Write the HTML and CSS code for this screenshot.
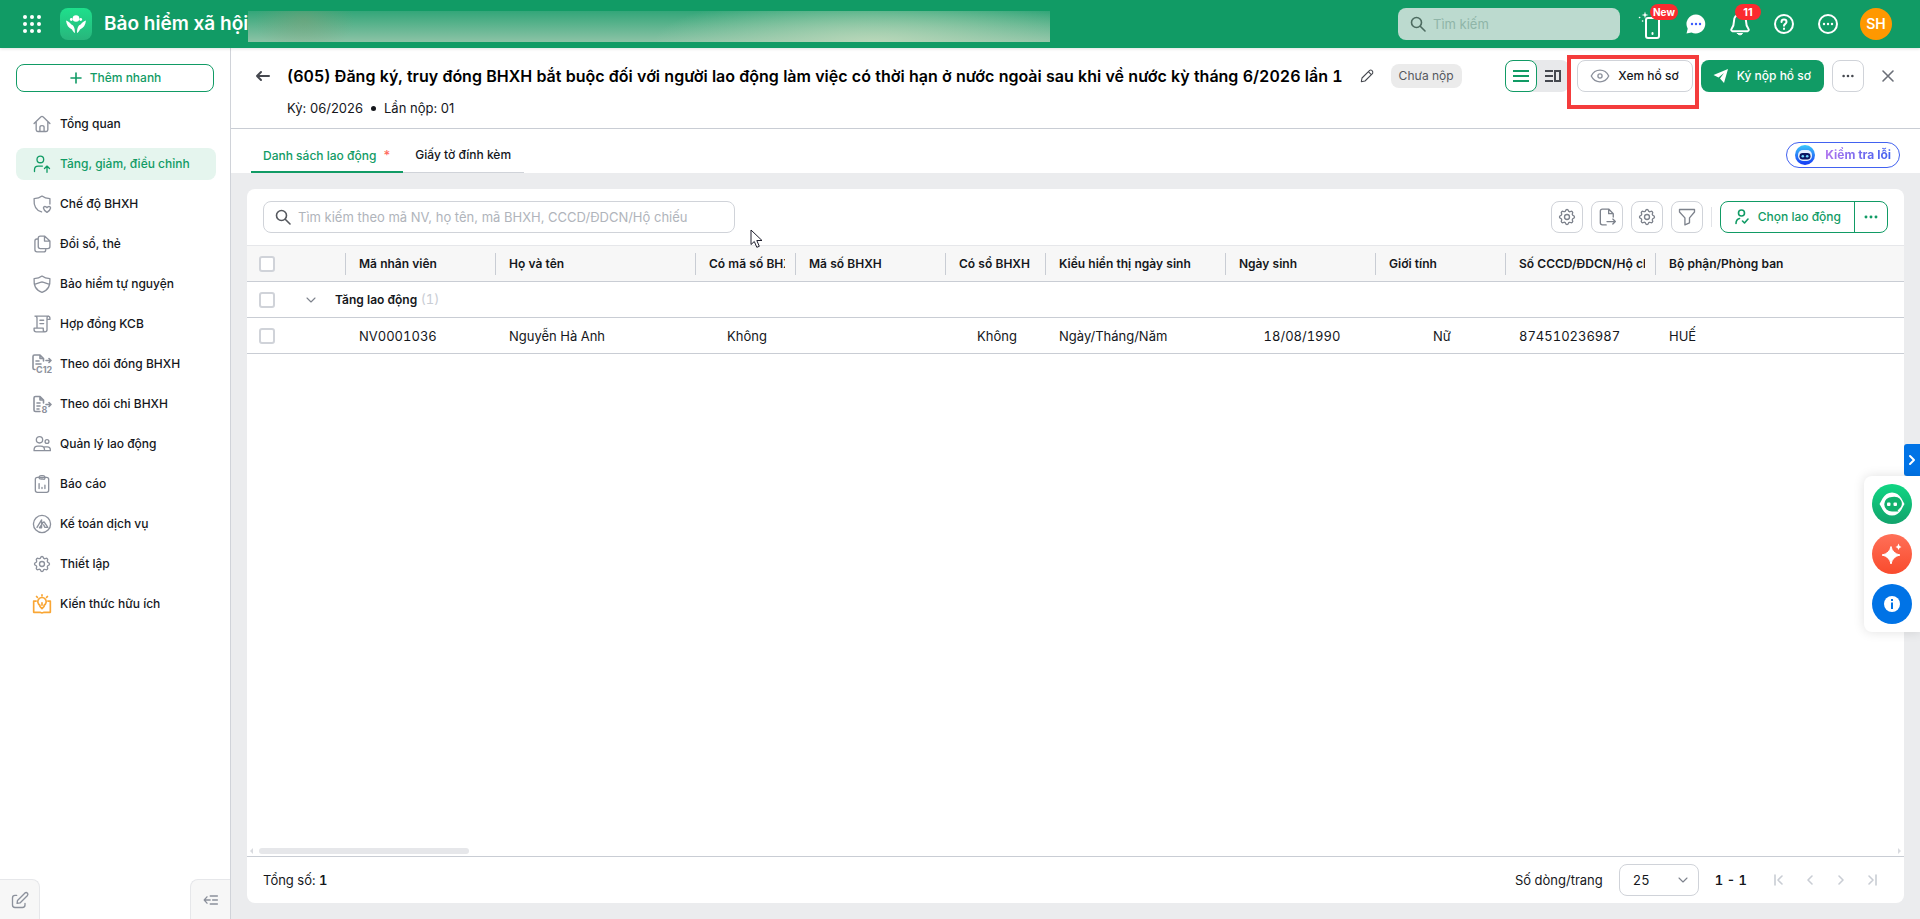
FILE: index.html
```html
<!DOCTYPE html>
<html lang="vi">
<head>
    <meta charset="UTF-8">
    <meta name="viewport" content="width=device-width, initial-scale=1.0">
    <title>Bảo hiểm xã hội</title>
    <link rel="stylesheet" href="styles.css">
</head>
<body>
    <svg class="sprite" aria-hidden="true">
        <symbol id="i-search" viewBox="0 0 16 16">
            <circle cx="6.500" cy="6.500" r="5"></circle>
            <path d="m10.500 10.500 4.500 4.500"></path>
        </symbol>
        <symbol id="i-gear" viewBox="0 0 24 24">
            <path d="M10.325 4.317c.426-1.756 2.924-1.756 3.350 0a1.724 1.724 0 0 0 2.573 1.066c1.543-.94 3.310.826 2.370 2.370a1.724 1.724 0 0 0 1.065 2.572c1.756.426 1.756 2.924 0 3.350a1.724 1.724 0 0 0-1.066 2.573c.94 1.543-.826 3.310-2.370 2.370a1.724 1.724 0 0 0-2.572 1.065c-.426 1.756-2.924 1.756-3.350 0a1.724 1.724 0 0 0-2.573-1.066c-1.543.94-3.310-.826-2.370-2.370a1.724 1.724 0 0 0-1.065-2.572c-1.756-.426-1.756-2.924 0-3.350a1.724 1.724 0 0 0 1.066-2.573c-.94-1.543.826-3.310 2.370-2.370 1 .608 2.296.07 2.572-1.065z"></path>
            <circle cx="12" cy="12" r="3"></circle>
        </symbol>
        <symbol id="i-dots" viewBox="0 0 24 24">
            <g fill="currentColor" stroke="none">
                <circle cx="4.500" cy="12" r="2.200"></circle>
                <circle cx="12" cy="12" r="2.200"></circle>
                <circle cx="19.500" cy="12" r="2.200"></circle>
            </g>
        </symbol>
        <symbol id="i-chevron" viewBox="0 0 24 24">
            <path d="m6 9 6 6 6-6"></path>
        </symbol>
    </svg>

    <header class="topbar">
        <button class="apps-button" aria-label="Ứng dụng">
            <svg width="20" height="20" viewBox="0 0 20 20" fill="currentColor">
                <circle cx="3" cy="3" r="2"></circle><circle cx="10" cy="3" r="2"></circle><circle cx="17" cy="3" r="2"></circle>
                <circle cx="3" cy="10" r="2"></circle><circle cx="10" cy="10" r="2"></circle><circle cx="17" cy="10" r="2"></circle>
                <circle cx="3" cy="17" r="2"></circle><circle cx="10" cy="17" r="2"></circle><circle cx="17" cy="17" r="2"></circle>
            </svg>
        </button>
        <div class="logo">
            <svg width="32" height="32" viewBox="0 0 32 32" fill="#fff">
                <circle cx="16" cy="10.500" r="3.300"></circle>
                <circle cx="11.300" cy="11.500" r="1.400"></circle>
                <circle cx="20.700" cy="11.500" r="1.400"></circle>
                <path d="M6 12.500c2.500 1 4.200 2.500 5.700 4.300 1.900.4 3.300 3.200 3.300 8.200-1.300-.6-2.400-2-3-3.500C8.500 20 6.500 17 6 12.500z"></path>
                <path d="M26 12.500c-2.500 1-4.200 2.500-5.700 4.300-1.900.4-3.300 3.200-3.300 8.200 1.300-.6 2.400-2 3-3.500 3.500-1.500 5.500-4.500 6-9z"></path>
            </svg>
        </div>
        <div class="app-name">Bảo hiểm xã hội</div>
        <div class="company"></div>
        <div class="top-right">
            <label class="top-search">
                <svg class="icon" width="16" height="16"><use href="#i-search"></use></svg>
                <input type="text" placeholder="Tìm kiếm" aria-label="Tìm kiếm">
            </label>
            <button class="top-button" aria-label="Ứng dụng di động">
                <svg class="icon" width="28" height="32" viewBox="0 0 28 32">
                    <rect x="8" y="10" width="13" height="20" rx="2"></rect>
                    <path d="M14.500 25v1" stroke-width="2"></path>
                    <path d="m7 3.500.8 2.700 2.700.8-2.700.8L7 10.500l-.8-2.700L3.500 7l2.700-.8z" fill="currentColor" stroke="none"></path>
                    <path d="M1.500 9.500h.2M4.500 13h.2" stroke-width="1.500"></path>
                </svg>
                <span class="badge new">New</span>
            </button>
            <button class="top-button" aria-label="Tin nhắn">
                <svg width="20" height="20" viewBox="0 0 20 20">
                    <path d="M10 .5a9.500 9.500 0 1 1-4.500 18L.5 19.500l1.200-4.800A9.500 9.500 0 0 1 10 .5z" fill="#fff"></path>
                    <g fill="#3b5bfd"><circle cx="6" cy="10" r="1.200"></circle><circle cx="10" cy="10" r="1.200"></circle><circle cx="14" cy="10" r="1.200"></circle></g>
                </svg>
            </button>
            <button class="top-button" aria-label="Thông báo">
                <svg class="icon" width="24" height="24" viewBox="0 0 24 24">
                    <path d="M12 2.500c-4 0-6 3-6 6.500 0 4-1 6-2.500 8-.7 1 0 2 1 2.200h15c1-.2 1.700-1.200 1-2.200C19 15 18 13 18 9c0-3.500-2-6.500-6-6.500z"></path>
                    <path d="M9.500 21.500h5c-.8 1.800-4.200 1.800-5 0z" fill="currentColor" stroke-width="1"></path>
                </svg>
                <span class="badge count">11</span>
            </button>
            <button class="top-button" aria-label="Trợ giúp">
                <svg class="icon" width="20" height="20" viewBox="0 0 20 20">
                    <circle cx="10" cy="10" r="9"></circle>
                    <path d="M7.500 8c0-3.300 5-3.300 5 0 0 1.800-2.500 2-2.500 3.800M10 14.500v.5"></path>
                </svg>
            </button>
            <button class="top-button" aria-label="Khác">
                <svg class="icon" width="20" height="20" viewBox="0 0 20 20">
                    <circle cx="10" cy="10" r="9"></circle>
                    <g fill="currentColor" stroke="none"><circle cx="6" cy="10" r="1.200"></circle><circle cx="10" cy="10" r="1.200"></circle><circle cx="14" cy="10" r="1.200"></circle></g>
                </svg>
            </button>
            <button class="avatar">SH</button>
        </div>
    </header>

    <div class="layout">
        <aside class="sidebar">
            <button class="quick-add">
                <svg class="icon" width="14" height="14" viewBox="0 0 14 14"><path d="M7 2v10M2 7h10"></path></svg>
                Thêm nhanh
            </button>
            <nav class="menu">
                <a class="menu-item" href="#">
                    <svg class="icon" width="20" height="20" viewBox="0 0 24 24"><path d="m2.500 11.500 8-8q1.500-1.200 3 0l8 8M5 9.500V19q0 2 2 2h10q2 0 2-2V9.500M9.500 21v-5q0-2 2.500-2t2.500 2v5"></path></svg>
                    Tổng quan
                </a>
                <a class="menu-item active" href="#">
                    <svg class="icon" width="20" height="20" viewBox="0 0 24 24"><circle cx="10" cy="6.500" r="4"></circle><path d="M3 21v-2q0-4.500 4.500-4.500h5M18 22v-7M15 17.500l3-3 3 3"></path></svg>
                    Tăng, giảm, điều chỉnh
                </a>
                <a class="menu-item" href="#">
                    <svg class="icon" width="20" height="20" viewBox="0 0 24 24"><path d="M21.500 12V5.500Q15.500 5.500 12 2.500 8.500 5.500 2.500 5.500C2 13 4 19.500 11.500 21.500M18 22c-6-4-4.500-7-2.500-7q1.800 0 2.500 1.500.7-1.500 2.500-1.500c2 0 3.500 3-2.500 7z"></path></svg>
                    Chế độ BHXH
                </a>
                <a class="menu-item" href="#">
                    <svg class="icon" width="20" height="20" viewBox="0 0 24 24"><path d="M15 2.500h-5q-2.500 0-2.500 2.500v10q0 2.500 2.500 2.500h9q2.500 0 2.500-2.500V8.500zM15 2.500v6h6M7.500 6H6Q3.500 6 3.500 8.500V19q0 2.500 2.500 2.500h8q2.500 0 2.500-3"></path></svg>
                    Đổi sổ, thẻ
                </a>
                <a class="menu-item" href="#">
                    <svg class="icon" width="20" height="20" viewBox="0 0 24 24"><path d="M12 2.500Q8.500 5.500 2.500 5.500C2 14 4 19 12 22c8-3 10-8 9.500-16.500Q15.500 5.500 12 2.500zM3 12.500l7-2.500q2-.7 4 0l7 2.500"></path></svg>
                    Bảo hiểm tự nguyện
                </a>
                <a class="menu-item" href="#">
                    <svg class="icon" width="20" height="20" viewBox="0 0 24 24"><path d="M6 16V5q0-2.500-2.500-2.500H19q2.500 0 2.500 2.500v1.500H18V19q0 2.500-2.500 2.500H5Q2.500 21.500 2.500 19v-2h11v2q0 2.500 2 2.500M18 6.500V5q0-2.500 2-2.500M9.500 7.500H14M9.500 11.500H14"></path></svg>
                    Hợp đồng KCB
                </a>
                <a class="menu-item" href="#">
                    <svg class="icon" width="20" height="20" viewBox="0 0 20 20"><path d="M3 15.500H2.500Q1 15.500 1 14V2.500Q1 1 2.500 1H8l3.500 3.500V7M8 1v3.500h3.500M4 7h3M4 10h5M14 6.500h5M17 4.500l2 2-2 2"></path><text x="4" y="19" class="icon-text">C12</text></svg>
                    Theo dõi đóng BHXH
                </a>
                <a class="menu-item" href="#">
                    <svg class="icon" width="20" height="20" viewBox="0 0 20 20"><path d="M8 17.500H3.500Q2 17.500 2 16V4q0-1.500 1.500-1.500H8L11.500 6v3M8 2.500V6h3.500M5 9h3M5 12h3M5 15h2M14 10.500h5M17 8.500l2 2-2 2"></path><text x="9.500" y="18.500" class="icon-text">8</text></svg>
                    Theo dõi chi BHXH
                </a>
                <a class="menu-item" href="#">
                    <svg class="icon" width="20" height="20" viewBox="0 0 24 24"><circle cx="9" cy="7" r="3.800"></circle><circle cx="18" cy="9" r="2.300"></circle><path d="M2.500 20v-1q0-4.500 4.500-4.500h3.500q4.500 0 4.500 4.500v1zM15 20h7v-1q0-3.500-3.500-3.500H15"></path></svg>
                    Quản lý lao động
                </a>
                <a class="menu-item" href="#">
                    <svg class="icon" width="20" height="20" viewBox="0 0 24 24"><rect x="4" y="4" width="16" height="18" rx="2.500"></rect><path d="M8.500 4.500Q8.500 2 11 2h2q2.500 0 2.500 2.500T13 6h-2Q8.500 6 8.500 4.500zM8.500 17.500v-6M12 17.500v-1.500M15.500 17.500v-4"></path></svg>
                    Báo cáo
                </a>
                <a class="menu-item" href="#">
                    <svg class="icon" width="20" height="20" viewBox="0 0 24 24"><circle cx="12" cy="12" r="10.300"></circle><path d="m6 16 5.500-9v9.500H9l3.500-5M12 11l2.500-1.500L19 16h-3.500L14 13"></path></svg>
                    Kế toán dịch vụ
                </a>
                <a class="menu-item" href="#">
                    <svg class="icon" width="20" height="20"><use href="#i-gear"></use></svg>
                    Thiết lập
                </a>
                <a class="menu-item" href="#">
                    <svg class="icon orange" width="20" height="20" viewBox="0 0 24 24"><path d="M5 8.500H2V22h8q2 1.500 4 0h8V8.500h-3M12 1v1.500M5.500 3l1 1M18.500 3l-1 1M9.500 15v-1.500a5 5 0 1 1 5 0V15L12 17.500zM12 10.500v3"></path></svg>
                    Kiến thức hữu ích
                </a>
            </nav>
            <div class="sidebar-bottom">
                <button class="corner-button left" aria-label="Góp ý">
                    <svg class="icon" width="20" height="20" viewBox="0 0 24 24"><path d="M8 6.500H6Q3 6.500 3 9.500V18q0 3 3 3h9q3 0 3-3v-2M9 12.500 18 3.500q1.500-1 3 .3 1 1.300 0 2.700l-9 9-3.500.5z"></path></svg>
                </button>
                <button class="corner-button right" aria-label="Thu gọn">
                    <svg class="icon" width="16" height="16" viewBox="0 0 20 20"><path d="M9 10H1.500M5 6 1.500 10 5 14M9 5h9M12 10h6M9 15h9"></path></svg>
                </button>
            </div>
        </aside>

        <main class="main">
            <section class="page-header">
                <div class="title-row">
                    <button class="plain-button back" aria-label="Quay lại">
                        <svg class="icon" width="16" height="16" viewBox="0 0 16 16"><path d="M14 8H2M6 4 2 8l4 4" stroke-width="2"></path></svg>
                    </button>
                    <h1 class="page-title">(605) Đăng ký, truy đóng BHXH bắt buộc đối với người lao động làm việc có thời hạn ở nước ngoài sau khi về nước kỳ tháng 6/2026 lần 1</h1>
                    <button class="plain-button edit" aria-label="Sửa">
                        <svg class="icon" width="16" height="16" viewBox="0 0 24 24"><path d="m3.500 20.500 1-5.500L16 3.500q1.500-1.200 3.300 0Q21.500 5.500 20.500 8L9 19.500zM14 5.500l4.500 4.500"></path></svg>
                    </button>
                    <span class="status">Chưa nộp</span>
                    <div class="header-actions">
                        <div class="view-toggle">
                            <button class="toggle active" aria-label="Dạng danh sách">
                                <svg width="18" height="12" viewBox="0 0 18 12" stroke="currentColor" stroke-width="2"><path d="M1 1h16M1 6h16M1 11h16"></path></svg>
                            </button>
                            <button class="toggle" aria-label="Dạng chia cột">
                                <svg width="16" height="12" viewBox="0 0 16 12" fill="none" stroke="currentColor" stroke-width="2"><path d="M0 1h8M0 6h8M0 11h8M10 1h5v10h-5z"></path></svg>
                            </button>
                        </div>
                        <div class="highlight-wrap">
                            <button class="button outline">
                                <svg class="icon" width="20" height="20" viewBox="0 0 24 24"><path d="M1.500 12Q5 5 12 5t10.500 7Q19 19 12 19T1.500 12z"></path><circle cx="12" cy="12" r="2.500"></circle></svg>
                                Xem hồ sơ
                            </button>
                            <div class="highlight"></div>
                        </div>
                        <button class="button primary">
                            <svg width="16" height="16" viewBox="0 0 16 16" fill="currentColor"><path d="M15 1 .5 7l5 2.500L11 5 7 10.500l4 4.500z"></path></svg>
                            Ký nộp hồ sơ
                        </button>
                        <button class="square-button dark" aria-label="Thêm">
                            <svg width="14" height="14"><use href="#i-dots"></use></svg>
                        </button>
                        <button class="plain-button close" aria-label="Đóng">
                            <svg class="icon" width="16" height="16" viewBox="0 0 16 16"><path d="m3 3 10 10M13 3 3 13"></path></svg>
                        </button>
                    </div>
                </div>
                <div class="sub-row">
                    <span>Kỳ: 06/2026</span>
                    <span class="bullet"></span>
                    <span>Lần nộp: 01</span>
                </div>
            </section>

            <section class="tab-bar">
                <div class="tabs">
                    <a class="tab active" href="#">Danh sách lao động <span class="required">*</span></a>
                    <a class="tab" href="#">Giấy tờ đính kèm</a>
                </div>
                <button class="check-button">
                    <svg width="20" height="20" viewBox="0 0 20 20">
                        <defs>
                            <linearGradient id="bot" x1="0" y1="0" x2="0" y2="1"><stop offset="0" stop-color="#3cc8fa"></stop><stop offset="1" stop-color="#1437f5"></stop></linearGradient>
                        </defs>
                        <circle cx="10" cy="10" r="10" fill="url(#bot)"></circle>
                        <rect x="3" y="5" width="14" height="11" rx="5" fill="#e4efff"></rect>
                        <rect x="4.500" y="8" width="11" height="6.500" rx="3.200" fill="#0b1560"></rect>
                        <circle cx="7.800" cy="11.200" r="1.300" fill="#6fd8ff"></circle>
                        <circle cx="12.200" cy="11.200" r="1.300" fill="#6fd8ff"></circle>
                    </svg>
                    <span class="check-label">Kiểm tra lỗi</span>
                </button>
            </section>

            <section class="content">
                <div class="card">
                    <div class="toolbar">
                        <label class="grid-search">
                            <svg class="icon" width="16" height="16"><use href="#i-search"></use></svg>
                            <input type="text" placeholder="Tìm kiếm theo mã NV, họ tên, mã BHXH, CCCD/ĐDCN/Hộ chiếu" aria-label="Tìm kiếm lao động">
                        </label>
                        <div class="toolbar-actions">
                            <button class="square-button" aria-label="Thiết lập"><svg class="icon" width="20" height="20"><use href="#i-gear"></use></svg></button>
                            <button class="square-button" aria-label="Xuất khẩu">
                                <svg class="icon" width="20" height="20" viewBox="0 0 24 24"><path d="M11 21.500H6.500q-2.500 0-2.500-2.500V5q0-2.500 2.500-2.500h7.500l5.500 5.500v4M14 2.500v5.500h5.500M12 17.500h10M19 14.500l3 3-3 3"></path></svg>
                            </button>
                            <button class="square-button" aria-label="Tùy chỉnh cột"><svg class="icon" width="20" height="20"><use href="#i-gear"></use></svg></button>
                            <button class="square-button" aria-label="Bộ lọc">
                                <svg class="icon" width="20" height="20" viewBox="0 0 24 24"><path d="M3 3h18v3l-6 7v6l-5.500 2.500V13L3 6z"></path></svg>
                            </button>
                            <span class="divider"></span>
                            <div class="split-button">
                                <button class="split-main">
                                    <svg class="icon" width="14" height="16" viewBox="0 0 14 16"><circle cx="6.500" cy="4" r="3"></circle><path d="M1 14.500q0-4 3.500-5M7.500 12l2 2 3.500-4"></path></svg>
                                    Chọn lao động
                                </button>
                                <button class="split-more" aria-label="Thêm"><svg width="16" height="16"><use href="#i-dots"></use></svg></button>
                            </div>
                        </div>
                    </div>

                    <div class="table-wrap">
                        <table class="grid">
                            <colgroup>
                                <col class="c-check"><col class="w150"><col class="w200"><col class="w100"><col class="w150"><col class="w100"><col class="w180"><col class="w150"><col class="w130"><col class="w150"><col>
                            </colgroup>
                            <thead>
                                <tr>
                                    <th class="check-cell"><input type="checkbox" aria-label="Chọn tất cả"></th>
                                    <th><div>Mã nhân viên</div></th>
                                    <th><div>Họ và tên</div></th>
                                    <th><div>Có mã số BHXH</div></th>
                                    <th><div>Mã số BHXH</div></th>
                                    <th><div>Có sổ BHXH</div></th>
                                    <th><div>Kiểu hiển thị ngày sinh</div></th>
                                    <th><div>Ngày sinh</div></th>
                                    <th><div>Giới tính</div></th>
                                    <th><div>Số CCCD/ĐDCN/Hộ chiếu</div></th>
                                    <th><div>Bộ phận/Phòng ban</div></th>
                                </tr>
                            </thead>
                            <tbody>
                                <tr>
                                    <td colspan="11" class="group-cell">
                                        <div class="group">
                                            <input type="checkbox" aria-label="Chọn nhóm Tăng lao động">
                                            <svg class="icon" width="16" height="16"><use href="#i-chevron"></use></svg>
                                            <span><b>Tăng lao động</b> <span class="muted">(1)</span></span>
                                        </div>
                                    </td>
                                </tr>
                                <tr>
                                    <td class="check-cell"><input type="checkbox" aria-label="Chọn Nguyễn Hà Anh"></td>
                                    <td>NV0001036</td>
                                    <td>Nguyễn Hà Anh</td>
                                    <td class="center">Không</td>
                                    <td></td>
                                    <td class="center">Không</td>
                                    <td>Ngày/Tháng/Năm</td>
                                    <td class="center">18/08/1990</td>
                                    <td class="center">Nữ</td>
                                    <td>874510236987</td>
                                    <td>HUẾ</td>
                                </tr>
                            </tbody>
                        </table>
                    </div>

                    <div class="scrollbar">
                        <span class="arrow left"></span>
                        <div class="track"><div class="thumb"></div></div>
                        <span class="arrow right"></span>
                    </div>

                    <div class="footer">
                        <span>Tổng số: <b>1</b></span>
                        <div class="paging">
                            <label for="page-size">Số dòng/trang</label>
                            <div class="select-wrap">
                                <select id="page-size"><option>25</option><option>50</option><option>100</option></select>
                                <svg class="icon" width="16" height="16"><use href="#i-chevron"></use></svg>
                            </div>
                            <b class="range">1 - 1</b>
                            <div class="pager">
                                <button aria-label="Trang đầu"><svg class="icon" width="16" height="16" viewBox="0 0 16 16"><path d="M4 3v10M11 4 7 8l4 4"></path></svg></button>
                                <button aria-label="Trang trước"><svg class="icon" width="16" height="16" viewBox="0 0 16 16"><path d="M10 4 6 8l4 4"></path></svg></button>
                                <button aria-label="Trang sau"><svg class="icon" width="16" height="16" viewBox="0 0 16 16"><path d="m6 4 4 4-4 4"></path></svg></button>
                                <button aria-label="Trang cuối"><svg class="icon" width="16" height="16" viewBox="0 0 16 16"><path d="M12 3v10M5 4l4 4-4 4"></path></svg></button>
                            </div>
                        </div>
                    </div>
                </div>
            </section>
        </main>
    </div>

    <div class="float-tools">
        <button class="float-toggle" aria-label="Mở rộng">
            <svg class="icon" width="12" height="12" viewBox="0 0 12 12"><path d="m4 2 4 4-4 4" stroke-width="2"></path></svg>
        </button>
        <div class="float-panel">
            <button class="round green" aria-label="Trợ lý">
                <svg width="28" height="28" viewBox="0 0 28 28"><path d="M1.500 14Q3 11.500 4.500 8.500 8 2.500 14 2.500t9.500 6q1.500 3 3 5.500-1.500 2.500-3 5.500-3.500 6-9.500 6t-9.500-6Q3 16.500 1.500 14z" fill="#fff"></path><path d="M14 7a7.500 7 0 1 0 0 14.500h6.500l-1-1.500A7.500 7 0 0 0 14 7z" fill="#10b06c"></path><rect x="9" y="12.500" width="3.500" height="3.500" rx="1" fill="#fff"></rect><rect x="15.500" y="12.500" width="3.500" height="3.500" rx="1" fill="#fff"></rect></svg>
            </button>
            <button class="round red" aria-label="AI">
                <svg width="24" height="24" viewBox="0 0 24 24" fill="#fff"><path d="M11 4.500q1.500 7 9 8.500-7.500 1.500-9 9-1.500-7.500-9-9 7.500-1.500 9-8.500z" stroke="#fff" stroke-width="1"></path><path d="M18.500 1.500q.5 3 3 3.500-2.500.5-3 3-.5-2.500-3-3 2.500-.5 3-3.500z"></path></svg>
            </button>
            <button class="round blue" aria-label="Thông tin">
                <svg width="16" height="16" viewBox="0 0 16 16"><circle cx="8" cy="8" r="8" fill="#fff"></circle><path d="M7 3h2v2H7zM7 6.500h2V13H7z" fill="#0073e6"></path></svg>
            </button>
        </div>
    </div>

    <svg class="pointer" width="14" height="20" viewBox="0 0 14 20"><path d="M1 1v14.500l3.300-3 2.500 5.800 2.500-1-2.500-5.800H12z" fill="#fff" stroke="#1f1f2e"></path></svg>
</body>
</html>
```
FILE: styles.css
```css
* {
    margin: 0;
    padding: 0;
    box-sizing: border-box;
}

body {
    font-family: Inter, Roboto, "Noto Sans", sans-serif;
    font-size: 13px;
    line-height: 20px;
    color: #15171c;
    height: 100vh;
    overflow: hidden;
    display: flex;
    flex-direction: column;
    background-color: #fff;
}

button,
input,
select {
    font: inherit;
    color: inherit;
    background: none;
    border: none;
    outline: none;
}

button {
    display: flex;
    align-items: center;
    justify-content: center;
    font-size: 12px;
    white-space: nowrap;
    cursor: pointer;
}

a {
    color: inherit;
    text-decoration: none;
}

svg {
    flex-shrink: 0;
}

.sprite {
    position: absolute;
    width: 0;
    height: 0;
}

.icon {
    fill: none;
    stroke: currentColor;
    stroke-width: 1.6;
    stroke-linecap: round;
    stroke-linejoin: round;
}

.icon-text {
    font-size: 9px;
    font-weight: 700;
    fill: currentColor;
    stroke: none;
}

/* top bar */
.topbar {
    height: 48px;
    flex-shrink: 0;
    background-color: #119b65;
    color: #fff;
    display: flex;
    align-items: center;
    padding: 0 28px 0 22px;
    box-shadow: 0 1px 3px rgb(0 0 0 / 0.12);
    z-index: 1;
}

.logo {
    width: 32px;
    height: 32px;
    margin: 0 12px 0 18px;
    border-radius: 8px;
    background: linear-gradient(#1ee08c, #28b57c);
}

.app-name {
    font-size: 19px;
    font-weight: 600;
    line-height: 24px;
    white-space: nowrap;
}

.company {
    flex: 0 1 802px;
    align-self: flex-start;
    height: 31px;
    margin-top: 11px;
    background:
        radial-gradient(ellipse 50px 34px at 7% 30%, #8c9a7466, transparent),
        radial-gradient(ellipse 220px 50px at 78% 100%, #c4dcbecc, transparent),
        linear-gradient(#33a679, #8cc3a6);
}

.top-right {
    margin-left: auto;
    display: flex;
    align-items: center;
    gap: 20px;
}

.top-search {
    width: 222px;
    height: 32px;
    padding: 0 12px;
    border-radius: 8px;
    background-color: #bcdacf;
    color: #4d6b60;
    display: flex;
    align-items: center;
    gap: 7px;
}

.top-search input {
    width: 100%;
}

.top-search input::placeholder {
    color: #8fb5a8;
}

.top-button {
    position: relative;
    width: 24px;
    height: 32px;
}

.top-button .icon {
    stroke-width: 2;
}

.badge {
    position: absolute;
    top: -4px;
    height: 16px;
    padding: 0 3px;
    border-radius: 8px;
    background-color: #fb2b2f;
    font-size: 10px;
    font-weight: 700;
    line-height: 16px;
}

.badge.new {
    left: 10px;
}

.badge.count {
    left: 7px;
    width: 26px;
    font-size: 11px;
}

.avatar {
    width: 32px;
    height: 32px;
    border-radius: 50%;
    background-color: #ff9800;
    font-size: 14px;
    font-weight: 600;
}

.layout {
    flex: 1;
    min-height: 0;
    display: flex;
}

/* sidebar */
.sidebar {
    width: 231px;
    flex-shrink: 0;
    border-right: 1px solid #d0d3d9;
    padding-top: 16px;
    display: flex;
    flex-direction: column;
}

.quick-add {
    height: 28px;
    margin: 0 16px 16px;
    border: 1px solid #119b65;
    border-radius: 8px;
    color: #119b65;
    font-weight: 500;
    gap: 7px;
}

.menu {
    flex: 1;
    padding: 0 14px 0 16px;
    display: flex;
    flex-direction: column;
    gap: 8px;
}

.menu-item {
    height: 32px;
    padding-left: 16px;
    border-radius: 8px;
    display: flex;
    align-items: center;
    gap: 8px;
    font-size: 12px;
    font-weight: 500;
    white-space: nowrap;
}

.menu-item .icon {
    color: #8c919c;
}

.menu-item.active {
    background-color: #e5f5ee;
    color: #119b65;
}

.menu-item.active .icon {
    color: #119b65;
}

.menu-item .icon.orange {
    color: #f9a635;
    stroke-width: 2;
}

.sidebar-bottom {
    display: flex;
    justify-content: space-between;
}

.corner-button {
    width: 40px;
    height: 40px;
    border: 1px solid #e6e7ea;
    border-bottom: none;
    background-color: #f7f7f7;
    color: #8c919c;
}

.corner-button.left {
    border-left: none;
    border-top-right-radius: 8px;
}

.corner-button.right {
    border-right: none;
    border-top-left-radius: 8px;
}

/* page header */
.main {
    flex: 1;
    min-width: 0;
    display: flex;
    flex-direction: column;
    background-color: #ebecee;
}

.page-header {
    background-color: #fff;
    padding: 12px 24px 10px;
    border-bottom: 1px solid #c9cdd4;
}

.title-row {
    display: flex;
    align-items: center;
    height: 32px;
}

.plain-button {
    width: 16px;
    height: 32px;
    color: #45484f;
}

.back {
    margin-right: 16px;
}

.page-title {
    font-size: 16px;
    font-weight: 600;
    font-variant-numeric: tabular-nums;
    line-height: 24px;
    color: #000;
    white-space: nowrap;
    overflow: hidden;
    text-overflow: ellipsis;
}

.edit {
    margin: 0 16px;
}

.status {
    height: 24px;
    padding: 0 8px;
    border-radius: 8px;
    background-color: #ebebeb;
    color: #55585e;
    font-size: 12px;
    line-height: 24px;
    white-space: nowrap;
}

.header-actions {
    margin-left: auto;
    display: flex;
    align-items: center;
    gap: 8px;
}

.view-toggle {
    display: flex;
    border-radius: 8px;
    background-color: #e8e9eb;
}

.toggle {
    width: 32px;
    height: 32px;
    color: #45484f;
}

.toggle.active {
    border: 1px solid #119b65;
    border-radius: 8px;
    background-color: #fff;
    color: #119b65;
}

.button {
    height: 32px;
    padding: 0 13px 0 12px;
    border-radius: 8px;
    font-weight: 500;
    gap: 8px;
}

.button.outline {
    border: 1px solid #d0d3d9;
    background-color: #fff;
}

.button.outline .icon {
    color: #8c919c;
}

.button.primary {
    background-color: #119b65;
    color: #fff;
}

.highlight-wrap {
    position: relative;
}

.highlight {
    position: absolute;
    inset: -5px -6px -17px -10px;
    border: 4px solid #f43c3c;
    pointer-events: none;
}

.square-button {
    width: 32px;
    height: 32px;
    border: 1px solid #d0d3d9;
    border-radius: 8px;
    background-color: #fff;
    color: #7d828c;
}

.square-button.dark {
    color: #45484f;
}

.close {
    margin-left: 8px;
    color: #6b6f78;
}

.sub-row {
    margin-top: 6px;
    padding-left: 32px;
    display: flex;
    align-items: center;
    gap: 8px;
}

.bullet {
    width: 5px;
    height: 5px;
    border-radius: 50%;
    background-color: #15171c;
}

/* tabs */
.tab-bar {
    height: 44px;
    flex-shrink: 0;
    padding: 0 20px;
    background-color: #fff;
    display: flex;
    align-items: center;
    justify-content: space-between;
}

.tabs {
    align-self: stretch;
    display: flex;
}

.tab {
    padding: 16px 13px 0 12px;
    border-bottom: 1px solid #d0d3d9;
    font-size: 12px;
    font-weight: 500;
}

.tab.active {
    border-bottom: 2px solid #119b65;
    color: #119b65;
}

.required {
    margin-left: 4px;
    font-size: 13px;
    color: #ff6b60;
}

.check-button {
    height: 26px;
    margin-top: 8px;
    padding: 0 8px;
    border: 1px solid #4262f0;
    border-radius: 13px;
    gap: 10px;
}

.check-label {
    font-weight: 700;
    background: linear-gradient(90deg, #b075ee, #4262f0);
    background-clip: text;
    color: transparent;
}

/* card and grid */
.content {
    flex: 1;
    min-height: 0;
    padding: 16px;
    display: flex;
}

.card {
    flex: 1;
    min-width: 0;
    border-radius: 8px;
    background-color: #fff;
    display: flex;
    flex-direction: column;
    overflow: hidden;
}

.toolbar {
    padding: 12px 16px;
    display: flex;
    align-items: center;
    justify-content: space-between;
}

.grid-search {
    width: 472px;
    height: 32px;
    padding: 0 11px;
    border: 1px solid #d0d3d9;
    border-radius: 8px;
    display: flex;
    align-items: center;
    gap: 7px;
    color: #55585e;
}

.grid-search input {
    flex: 1;
}

.grid-search input::placeholder {
    color: #b0b4bb;
}

.toolbar-actions {
    display: flex;
    align-items: center;
    gap: 8px;
}

.divider {
    width: 1px;
    height: 20px;
    background-color: #e1e3e7;
}

.split-button {
    display: flex;
    height: 32px;
    border: 1px solid #119b65;
    border-radius: 8px;
    color: #119b65;
}

.split-main {
    padding: 0 13px 0 14px;
    gap: 9px;
    font-weight: 500;
}

.split-more {
    width: 33px;
    border-left: 1px solid #119b65;
}

.table-wrap {
    flex: 1;
    min-height: 0;
    overflow: hidden;
}

.grid {
    width: 100%;
    table-layout: fixed;
    border-collapse: separate;
    border-spacing: 0;
    font-variant-numeric: tabular-nums;
}

.c-check { width: 98px; }
.w100 { width: 100px; }
.w130 { width: 130px; }
.w150 { width: 150px; }
.w180 { width: 180px; }
.w200 { width: 200px; }

.grid th {
    height: 37px;
    border-top: 1px solid #e6e7ea;
    border-bottom: 1px solid #c9cdd4;
    background-color: #f7f7f7;
    font-size: 12px;
    font-weight: 600;
    text-align: left;
    padding-right: 10px;
}

.grid th div {
    height: 22px;
    padding-left: 13px;
    border-left: 1px solid #c9cdd4;
    line-height: 22px;
    white-space: nowrap;
    overflow: hidden;
}

.grid td {
    height: 36px;
    padding: 0 10px 0 14px;
    border-bottom: 1px solid #c9cdd4;
    white-space: nowrap;
}

.grid td.center {
    text-align: center;
}

.grid .check-cell,
.grid .group-cell {
    padding-left: 12px;
}

.grid b {
    font-size: 12px;
    font-weight: 600;
}

.group {
    display: flex;
    align-items: center;
}

.group .icon {
    margin: 0 16px 0 28px;
    color: #7d828c;
}

.muted {
    color: #c9cdd4;
}

input[type="checkbox"] {
    appearance: none;
    display: block;
    width: 16px;
    height: 16px;
    border: 2px solid #d0d3d9;
    border-radius: 3px;
    background-color: #fff;
}

.scrollbar {
    height: 8px;
    padding: 0 3px;
    display: flex;
    align-items: flex-start;
    gap: 6px;
}

.track {
    flex: 1;
}

.thumb {
    width: 210px;
    height: 6px;
    border-radius: 3px;
    background-color: #e6e7ea;
}

.arrow {
    border: 3px solid transparent;
    border-left-width: 0;
    border-right: 3px solid #d9dbe0;
}

.arrow.right {
    border-right-width: 0;
    border-left: 3px solid #d9dbe0;
}

/* footer */
.footer {
    height: 47px;
    padding: 0 24px 0 16px;
    border-top: 1px solid #c9cdd4;
    font-variant-numeric: tabular-nums;
    display: flex;
    align-items: center;
    justify-content: space-between;
}

.footer b {
    font-weight: 600;
}

.paging {
    display: flex;
    align-items: center;
    gap: 16px;
}

.select-wrap {
    position: relative;
    width: 80px;
    height: 32px;
}

.select-wrap select {
    appearance: none;
    width: 100%;
    height: 100%;
    padding: 0 13px;
    border: 1px solid #d0d3d9;
    border-radius: 8px;
}

.select-wrap .icon {
    position: absolute;
    top: 8px;
    right: 8px;
    color: #7d828c;
    pointer-events: none;
}

.pager {
    display: flex;
    gap: 15px;
    margin-left: 8px;
    color: #c9cdd4;
}

/* floating helpers */
.float-tools {
    position: absolute;
    top: 444px;
    right: 0;
    z-index: 2;
    display: flex;
    flex-direction: column;
    align-items: flex-end;
}

.float-toggle {
    width: 16px;
    height: 32px;
    border-radius: 3px 0 0 3px;
    background-color: #0073e6;
    color: #fff;
}

.float-panel {
    padding: 8px;
    border-radius: 8px 0 0 8px;
    background-color: #fff;
    box-shadow: 0 0 12px rgb(0 0 0 / 0.12);
    display: flex;
    flex-direction: column;
    gap: 10px;
}

.round {
    width: 40px;
    height: 40px;
    border-radius: 50%;
}

.round.green { background: linear-gradient(#10d683, #12a36c); }
.round.red { background: linear-gradient(#ff7058, #f94b2d); }
.round.blue { background-color: #0073e6; }

.pointer {
    position: absolute;
    left: 750px;
    top: 229px;
}
```
